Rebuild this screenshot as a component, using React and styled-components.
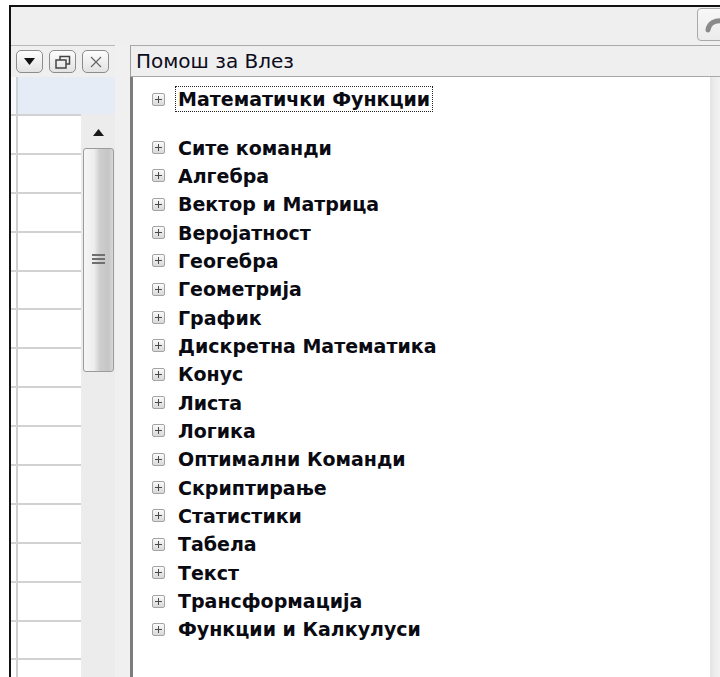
import React from "react"
import styled, { createGlobalStyle } from "styled-components"

const GlobalStyle = createGlobalStyle`
  html, body {
    margin: 0;
    padding: 0;
    background: #fff;
    overflow: hidden;
  }
  body {
    font-family: "DejaVu Sans", "Liberation Sans", Arial, sans-serif;
  }
`

const categories = [
  "Сите команди",
  "Алгебра",
  "Вектор и Матрица",
  "Веројатност",
  "Геогебра",
  "Геометрија",
  "График",
  "Дискретна Математика",
  "Конус",
  "Листа",
  "Логика",
  "Оптимални Команди",
  "Скриптирање",
  "Статистики",
  "Табела",
  "Текст",
  "Трансформација",
  "Функции и Калкулуси",
]

const Page = styled.div`
  box-sizing: border-box;
  height: 677px;
  padding: 5px 0 0 9px;
  background: #fff;
`

const Window = styled.div`
  box-sizing: border-box;
  height: 100%;
  display: flex;
  flex-direction: column;
  border-top: 2px solid #111;
  border-left: 2px solid #111;
  background: #efefef;
`

const Toolbar = styled.div`
  height: 38px;
  display: flex;
  justify-content: flex-end;
  align-items: flex-start;
  padding-top: 1px;
  box-sizing: border-box;
`

const ToolButton = styled.div`
  width: 32px;
  height: 33px;
  margin-right: -9px;
  box-sizing: border-box;
  border: 1px solid #a9a9a9;
  border-radius: 4px;
  background: linear-gradient(#f8f8f8, #ebebeb);
  display: flex;
  align-items: center;
  padding-left: 5px;
`

const Main = styled.div`
  flex: 1;
  display: flex;
  min-height: 0;
`

const LeftPanel = styled.div`
  width: 104px;
  display: flex;
  flex-direction: column;
  border-top: 1px solid #b9b9b9;
`

const PanelHeader = styled.div`
  height: 31px;
  display: flex;
  justify-content: flex-end;
  align-items: center;
  gap: 6px;
  padding-right: 6px;
  box-sizing: border-box;
`

const FrameButton = styled.div`
  width: 27px;
  height: 23px;
  box-sizing: border-box;
  border: 1px solid #8c8c8c;
  border-radius: 5px;
  background: linear-gradient(#fdfdfd, #e2e2e2);
  display: flex;
  align-items: center;
  justify-content: center;
`

const ColumnHeader = styled.div`
  height: 37px;
  display: flex;
`

const HeaderCorner = styled.div`
  width: 5px;
  background: #f7f9fc;
  border-right: 2px solid #cfd3d8;
`

const HeaderCell = styled.div`
  flex: 1;
  background: #e5ecf6;
`

const SheetBody = styled.div`
  flex: 1;
  display: flex;
  min-height: 0;
  overflow: hidden;
`

const Cells = styled.div`
  width: 70px;
  background: #fff;
  border-top: 2px solid #d2d2d2;
  box-sizing: border-box;
`

const SheetRow = styled.div`
  height: 38.9px;
  box-sizing: border-box;
  display: flex;
  border-bottom: 2px solid #d2d2d2;
`

const RowHead = styled.div`
  width: 5px;
  border-right: 2px solid #cfcfcf;
`

const VScroll = styled.div`
  width: 34px;
  display: flex;
  flex-direction: column;
  align-items: center;
  background: #ececec;
`

const ArrowUp = styled.div`
  height: 34px;
  width: 100%;
  display: flex;
  align-items: center;
  justify-content: center;
  padding-top: 2px;
  box-sizing: border-box;
`

const Thumb = styled.div`
  width: 31px;
  height: 224px;
  box-sizing: border-box;
  border: 1px solid #9b9b9b;
  border-radius: 3px;
  background: linear-gradient(to right, #f6f6f6, #ededed 35%, #cdcdcd 55%, #c6c6c6 85%, #d8d8d8);
  display: flex;
  flex-direction: column;
  align-items: center;
  justify-content: center;
  gap: 2px;
  padding-bottom: 2px;
`

const GripLine = styled.div`
  width: 13px;
  height: 2px;
  background: #6f6f6f;
`

const Splitter = styled.div`
  width: 15px;
  background: #f0f0f0;
`

const RightPanel = styled.div`
  flex: 1;
  display: flex;
  flex-direction: column;
  border-top: 1px solid #a9a9a9;
  border-left: 1px solid #a0a0a0;
`

const TitleBar = styled.div`
  height: 31px;
  box-sizing: border-box;
  padding-left: 5px;
  display: flex;
  align-items: center;
  font-size: 20px;
  color: #0c0c1c;
  border-bottom: 1px solid #a8a8a8;
`

const HelpBody = styled.div`
  flex: 1;
  display: flex;
  background: #fff;
  margin-left: -1px;
  border-left: 3px solid #7c7c7c;
  min-height: 0;
`

const Tree = styled.div`
  flex: 1;
  padding: 8px 0 0 19px;
`

const Group = styled.div`
  margin-top: ${p => p.$gap || 0}px;
`

const Node = styled.div`
  height: 28.35px;
  display: flex;
  align-items: center;
`

const PlusBox = styled.div`
  width: 13px;
  height: 13px;
  box-sizing: border-box;
  border: 1px solid #a4a4a4;
  border-radius: 2px;
  background: linear-gradient(#fbfbfb, #d8d8d8);
  position: relative;
  margin-right: 13px;

  &::before,
  &::after {
    content: "";
    position: absolute;
    background: #4a4a4a;
  }
  &::before {
    left: 2px;
    right: 2px;
    top: 5px;
    height: 1px;
  }
  &::after {
    top: 2px;
    bottom: 2px;
    left: 5px;
    width: 1px;
  }
`

const Label = styled.span`
  font-size: 19px;
  font-weight: bold;
  color: #0a0a12;
  line-height: 24px;
  box-sizing: border-box;
  border: 1px dotted ${p => (p.$focused ? "#222" : "transparent")};
  padding: 0 2px;
  margin-left: -3px;
`

const EdgeStrip = styled.div`
  width: 10px;
  background: linear-gradient(to right, #e2e2e2, #ececec 40%, #f2f2f2);
`

const UndoIcon = () => (
  <svg width="20" height="20" viewBox="0 0 20 20">
    <path
      d="M20 6 C 12 5, 6 8, 5 15"
      fill="none"
      stroke="#8a8a8a"
      strokeWidth="5"
      strokeLinecap="round"
    />
  </svg>
)

const MenuIcon = () => (
  <svg width="11" height="7" viewBox="0 0 11 7">
    <path d="M0 0 H11 L5.5 7 Z" fill="#111" />
  </svg>
)

const RestoreIcon = () => (
  <svg width="16" height="14" viewBox="0 0 16 14">
    <rect x="1" y="5" width="10" height="8" fill="none" stroke="#444" strokeWidth="1.5" />
    <path d="M5 5 V1.5 H14.5 V9 H11" fill="none" stroke="#444" strokeWidth="1.5" />
  </svg>
)

const CloseIcon = () => (
  <svg width="12" height="12" viewBox="0 0 12 12">
    <path d="M1 1 L11 11 M11 1 L1 11" stroke="#666" strokeWidth="1.2" />
  </svg>
)

const ScrollArrow = () => (
  <svg width="11" height="7" viewBox="0 0 11 7">
    <path d="M0 7 L5.5 0 L11 7 Z" fill="#1a1a1a" />
  </svg>
)

const App = () => {
  const rows = Array.from({ length: 15 }, (_, i) => i)

  return (
    <Page>
      <GlobalStyle />
      <Window>
        <Toolbar>
          <ToolButton>
            <UndoIcon />
          </ToolButton>
        </Toolbar>
        <Main>
          <LeftPanel>
            <PanelHeader>
              <FrameButton>
                <MenuIcon />
              </FrameButton>
              <FrameButton>
                <RestoreIcon />
              </FrameButton>
              <FrameButton>
                <CloseIcon />
              </FrameButton>
            </PanelHeader>
            <ColumnHeader>
              <HeaderCorner />
              <HeaderCell />
            </ColumnHeader>
            <SheetBody>
              <Cells>
                {rows.map(r => (
                  <SheetRow key={r}>
                    <RowHead />
                  </SheetRow>
                ))}
              </Cells>
              <VScroll>
                <ArrowUp>
                  <ScrollArrow />
                </ArrowUp>
                <Thumb>
                  <GripLine />
                  <GripLine />
                  <GripLine />
                </Thumb>
              </VScroll>
            </SheetBody>
          </LeftPanel>
          <Splitter />
          <RightPanel>
            <TitleBar>Помош за Влез</TitleBar>
            <HelpBody>
              <Tree>
                <Group>
                  <Node>
                    <PlusBox />
                    <Label $focused>Математички Функции</Label>
                  </Node>
                </Group>
                <Group $gap={20}>
                  {categories.map(name => (
                    <Node key={name}>
                      <PlusBox />
                      <Label>{name}</Label>
                    </Node>
                  ))}
                </Group>
              </Tree>
              <EdgeStrip />
            </HelpBody>
          </RightPanel>
        </Main>
      </Window>
    </Page>
  )
}

export default App
